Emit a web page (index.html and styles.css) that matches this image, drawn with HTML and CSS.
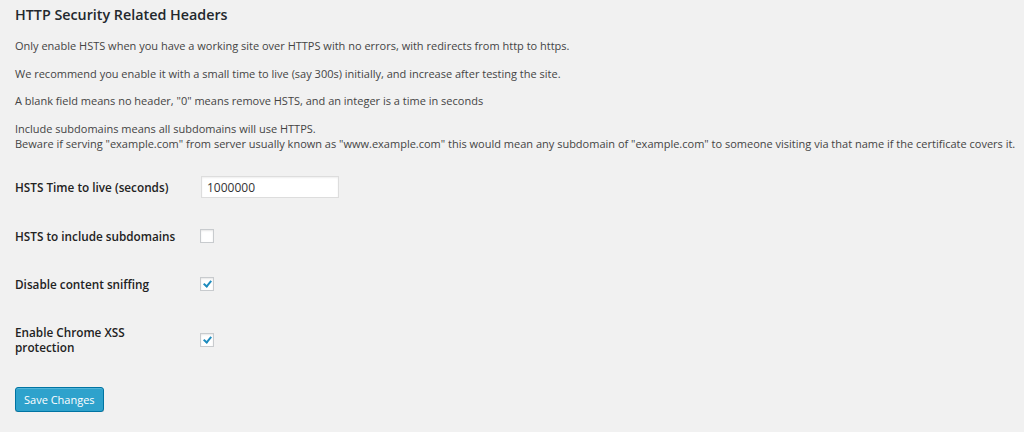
FILE: index.html
```html
<!DOCTYPE html>
<html lang="en">
<head>
    <meta charset="UTF-8">
    <meta name="viewport" content="width=device-width, initial-scale=1.0">
    <title>HTTP Security Related Headers</title>
    <link rel="stylesheet" href="styles.css">
</head>
<body>
    <div class="wrap">
        <h3 class="title">HTTP Security Related Headers</h3>
        <p>Only enable HSTS when you have a working site over HTTPS with no errors, with redirects from http to https.</p>
        <p>We recommend you enable it with a small time to live (say 300s) initially, and increase after testing the site.</p>
        <p>A blank field means no header, "0" means remove HSTS, and an integer is a time in seconds</p>
        <p>Include subdomains means all subdomains will use HTTPS.<br>
        Beware if serving "example.com" from server usually known as "www.example.com" this would mean any subdomain of "example.com" to someone visiting via that name if the certificate covers it.</p>

        <form class="settings" id="securityHeaders">
            <div class="row">
                <label class="row-label" for="hsts_ttl">HSTS Time to live (seconds)</label>
                <div class="row-field">
                    <input type="text" id="hsts_ttl" name="hsts_ttl" value="1000000">
                </div>
            </div>
            <div class="row">
                <label class="row-label" for="hsts_subdomains">HSTS to include subdomains</label>
                <div class="row-field">
                    <input type="checkbox" id="hsts_subdomains" name="hsts_subdomains">
                </div>
            </div>
            <div class="row">
                <label class="row-label" for="nosniff">Disable content sniffing</label>
                <div class="row-field">
                    <input type="checkbox" id="nosniff" name="nosniff" checked>
                </div>
            </div>
            <div class="row">
                <label class="row-label" for="xss_protection">Enable Chrome XSS protection</label>
                <div class="row-field">
                    <input type="checkbox" id="xss_protection" name="xss_protection" checked>
                </div>
            </div>
            <div class="submit">
                <button type="submit" class="button-primary">Save Changes</button>
            </div>
        </form>
    </div>
</body>
</html>
```

FILE: styles.css
```css
body {
    margin: 0;
    background-color: #f1f1f1;
    color: #444;
    font-family: "Open Sans", sans-serif;
    font-size: 11px;
    line-height: 15px;
}
.wrap {
    padding: 5px 0 0 15px;
}
.title {
    margin: 0 0 13px 0;
    font-size: 14.3px;
    line-height: 20px;
    font-weight: 600;
    color: #23282d;
}
p {
    margin: 0 0 12.5px 0;
}
.settings {
    margin-top: -1px;
}
.row {
    display: grid;
    grid-template-columns: 185px 1fr;
    align-items: center;
}
.row-label {
    padding: 16.5px 15px 16.5px 0;
    font-size: 11.75px;
    font-weight: 600;
    color: #222;
}
.row-field {
    display: flex;
    align-items: center;
}
input[type="text"] {
    width: 138px;
    height: 22px;
    margin: 14px 0 14px 1px;
    padding: 0 5px;
    box-sizing: border-box;
    border: 1px solid #ddd;
    background-color: #fff;
    box-shadow: inset 0 1px 2px rgba(0, 0, 0, 0.07);
    font-family: "Open Sans", sans-serif;
    font-size: 12px;
    color: #333;
    outline: none;
}
input[type="checkbox"] {
    appearance: none;
    -webkit-appearance: none;
    position: relative;
    width: 14px;
    height: 14px;
    margin: 0;
    border: 1px solid #c8cbce;
    background-color: #fff;
    box-shadow: inset 0 1px 2px rgba(0, 0, 0, 0.1);
    box-sizing: border-box;
}
input[type="checkbox"]:checked::before {
    content: "";
    position: absolute;
    left: 4px;
    top: 1px;
    width: 3px;
    height: 6px;
    border-right: 2.5px solid #1e8cbe;
    border-bottom: 2.5px solid #1e8cbe;
    transform: rotate(40deg);
}
.submit {
    margin-top: 16px;
}
.button-primary {
    height: 25px;
    padding: 0 8px;
    border: 1px solid #0074a2;
    border-radius: 3px;
    background-color: #2ea2cc;
    box-shadow: inset 0 1px 0 rgba(120, 200, 230, 0.5), 0 1px 0 rgba(0, 0, 0, 0.15);
    color: #fff;
    font-family: "Open Sans", sans-serif;
    font-size: 11px;
    cursor: pointer;
}
.button-primary:hover {
    background-color: #1e8cbe;
}
```
